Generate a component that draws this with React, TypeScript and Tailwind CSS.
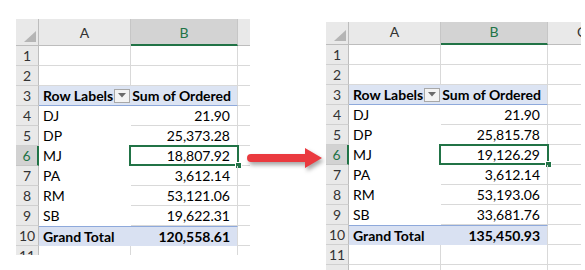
import React from "react";

type Row = { n: number; a: string; b: string };

const leftRows: Row[] = [
  { n: 4, a: "DJ", b: "21.90" },
  { n: 5, a: "DP", b: "25,373.28" },
  { n: 6, a: "MJ", b: "18,807.92" },
  { n: 7, a: "PA", b: "3,612.14" },
  { n: 8, a: "RM", b: "53,121.06" },
  { n: 9, a: "SB", b: "19,622.31" },
];
const rightRows: Row[] = [
  { n: 4, a: "DJ", b: "21.90" },
  { n: 5, a: "DP", b: "25,815.78" },
  { n: 6, a: "MJ", b: "19,126.29" },
  { n: 7, a: "PA", b: "3,612.14" },
  { n: 8, a: "RM", b: "53,193.06" },
  { n: 9, a: "SB", b: "33,681.76" },
];

function RowNum({ n, sel }: { n: number; sel?: boolean }) {
  return (
    <div
      className={
        sel
          ? "w-[23px] shrink-0 h-full flex items-center justify-center bg-[#d2d2d2] border-r-2 border-r-[#217346] border-b border-b-[#c6c6c6] text-[#217346]"
          : "w-[23px] shrink-0 h-full flex items-center justify-center bg-[#e9e9e9] border-r border-r-[#bdbdbd] border-b border-b-[#d0d0d0] text-[#333]"
      }
    >
      {n}
    </div>
  );
}

function Sheet({
  rows,
  total,
  cLabel,
  wide,
}: {
  rows: Row[];
  total: string;
  cLabel?: string;
  wide?: boolean;
}) {
  return (
    <div
      className={
        wide
          ? "w-[255px] h-[248px] mt-[22px] overflow-hidden text-[14px] text-black leading-none"
          : "w-[234px] h-[236px] mt-[19px] overflow-hidden text-[14px] text-black leading-none"
      }
    >
      {/* column header */}
      <div className={wide ? "flex h-[23px]" : "flex h-[27px]"}>
        <div className="w-[23px] shrink-0 h-full bg-[#e9e9e9] border-r border-r-[#bdbdbd] border-b border-b-[#bdbdbd] relative">
          <svg className="absolute right-[2px] bottom-[3px]" width="12" height="11" viewBox="0 0 12 11">
            <polygon points="12,0 12,11 0,11" fill="#b5b5b5" />
          </svg>
        </div>
        <div className="w-[92px] shrink-0 h-full bg-[#e9e9e9] border-r border-r-[#c6c6c6] border-b border-b-[#bdbdbd] flex items-end justify-center pb-[5px] text-[#333]">
          A
        </div>
        <div className="w-[107px] shrink-0 h-full bg-[#d3d3d3] border-r border-r-[#c6c6c6] border-b-2 border-b-[#217346] flex items-end justify-center pb-[4px] text-[#217346]">
          B
        </div>
        <div className="flex-1 h-full bg-[#e9e9e9] border-b border-b-[#bdbdbd] flex items-end pl-[29px] pb-[5px] text-[#333]">
          {cLabel}
        </div>
      </div>

      {/* rows 1,2 */}
      {[1, 2].map((n) => (
        <div key={n} className="flex h-[20px]">
          <RowNum n={n} />
          <div className="w-[92px] shrink-0 h-full border-r border-b border-[#d9d9d9]" />
          <div className="w-[107px] shrink-0 h-full border-r border-b border-[#d9d9d9]" />
          <div className="flex-1 h-full border-b border-[#d9d9d9]" />
        </div>
      ))}

      {/* row 3 pivot header */}
      <div className="flex h-[20px]">
        <RowNum n={3} />
        <div className="w-[92px] shrink-0 h-full bg-[#dce4f3] border-b border-b-[#8ea9db] flex items-center pl-[4px] font-bold">
          <span className="flex-1">Row Labels</span>
          <span className="w-[16px] h-[14px] mr-[1px] bg-[#f3f3f3] border border-[#a8a8a8] flex items-center justify-center">
            <svg width="8" height="5" viewBox="0 0 8 5">
              <polygon points="0,0 8,0 4,4.5" fill="#6b6b6b" />
            </svg>
          </span>
        </div>
        <div className="w-[107px] shrink-0 h-full bg-[#dce4f3] border-r border-r-[#d9d9d9] border-b border-b-[#8ea9db] flex items-center justify-end pr-[6px] font-bold">
          Sum of Ordered
        </div>
        <div className="flex-1 h-full border-b border-[#d9d9d9]" />
      </div>

      {rows.map((r) => (
        <div key={r.n} className="flex h-[20px]">
          <RowNum n={r.n} sel={r.n === 6} />
          <div className="w-[92px] shrink-0 h-full flex items-center pl-[4px]">{r.a}</div>
          <div className="w-[107px] shrink-0 h-full border-r border-b border-[#d9d9d9] flex items-center justify-end pr-[7px] relative">
            {r.b}
            {r.n === 6 && (
              <>
                <div className="absolute left-[-2px] top-[-1px] right-[-2px] bottom-[-1px] border-2 border-[#217346]" />
                <div className="absolute right-[-5px] bottom-[-4px] w-[7px] h-[7px] bg-[#217346] border border-white" />
              </>
            )}
          </div>
          <div className="flex-1 h-full border-b border-[#d9d9d9]" />
        </div>
      ))}

      {/* row 10 grand total */}
      <div className="flex h-[20px]">
        <RowNum n={10} />
        <div className="w-[92px] shrink-0 h-full bg-[#d9e1f2] border-t border-t-[#8ea9db] flex items-center pl-[4px] font-bold">
          Grand Total
        </div>
        <div className="w-[107px] shrink-0 h-full bg-[#d9e1f2] border-t border-t-[#8ea9db] border-r border-r-[#d9d9d9] flex items-center justify-end pr-[7px] font-bold">
          {total}
        </div>
        <div className="flex-1 h-full border-b border-[#d9d9d9]" />
      </div>

      {/* row 11 */}
      <div className="flex h-[20px]">
        <RowNum n={11} />
        <div className="w-[92px] shrink-0 h-full border-r border-b border-[#d9d9d9]" />
        <div className="w-[107px] shrink-0 h-full border-r border-b border-[#d9d9d9]" />
        <div className="flex-1 h-full border-b border-[#d9d9d9]" />
      </div>
      <div className="flex h-[20px]">
        <div className="w-[23px] shrink-0 h-full bg-[#e9e9e9] border-r border-r-[#bdbdbd]" />
        <div className="w-[92px] shrink-0 h-full border-r border-[#d9d9d9]" />
        <div className="w-[107px] shrink-0 h-full border-r border-[#d9d9d9]" />
      </div>
    </div>
  );
}

export default function App() {
  return (
    <div className="w-[585px] h-[270px] bg-white overflow-hidden flex items-start pl-[16px] font-['Lato',sans-serif]">
      <Sheet rows={leftRows} total="120,558.61" />
      <svg
        className="shrink-0 mt-[146px] -ml-[4px] -mr-[2px] drop-shadow-[2px_3px_2px_rgba(0,0,0,0.35)]"
        width="82"
        height="26"
        viewBox="0 0 82 26"
      >
        <path d="M5 8 H59 V2 L76 12 L59 22 V16 H5 A4 4 0 0 1 5 8 Z" fill="#ea3a3f" />
      </svg>
      <Sheet rows={rightRows} total="135,450.93" cLabel="C" wide />
    </div>
  );
}
